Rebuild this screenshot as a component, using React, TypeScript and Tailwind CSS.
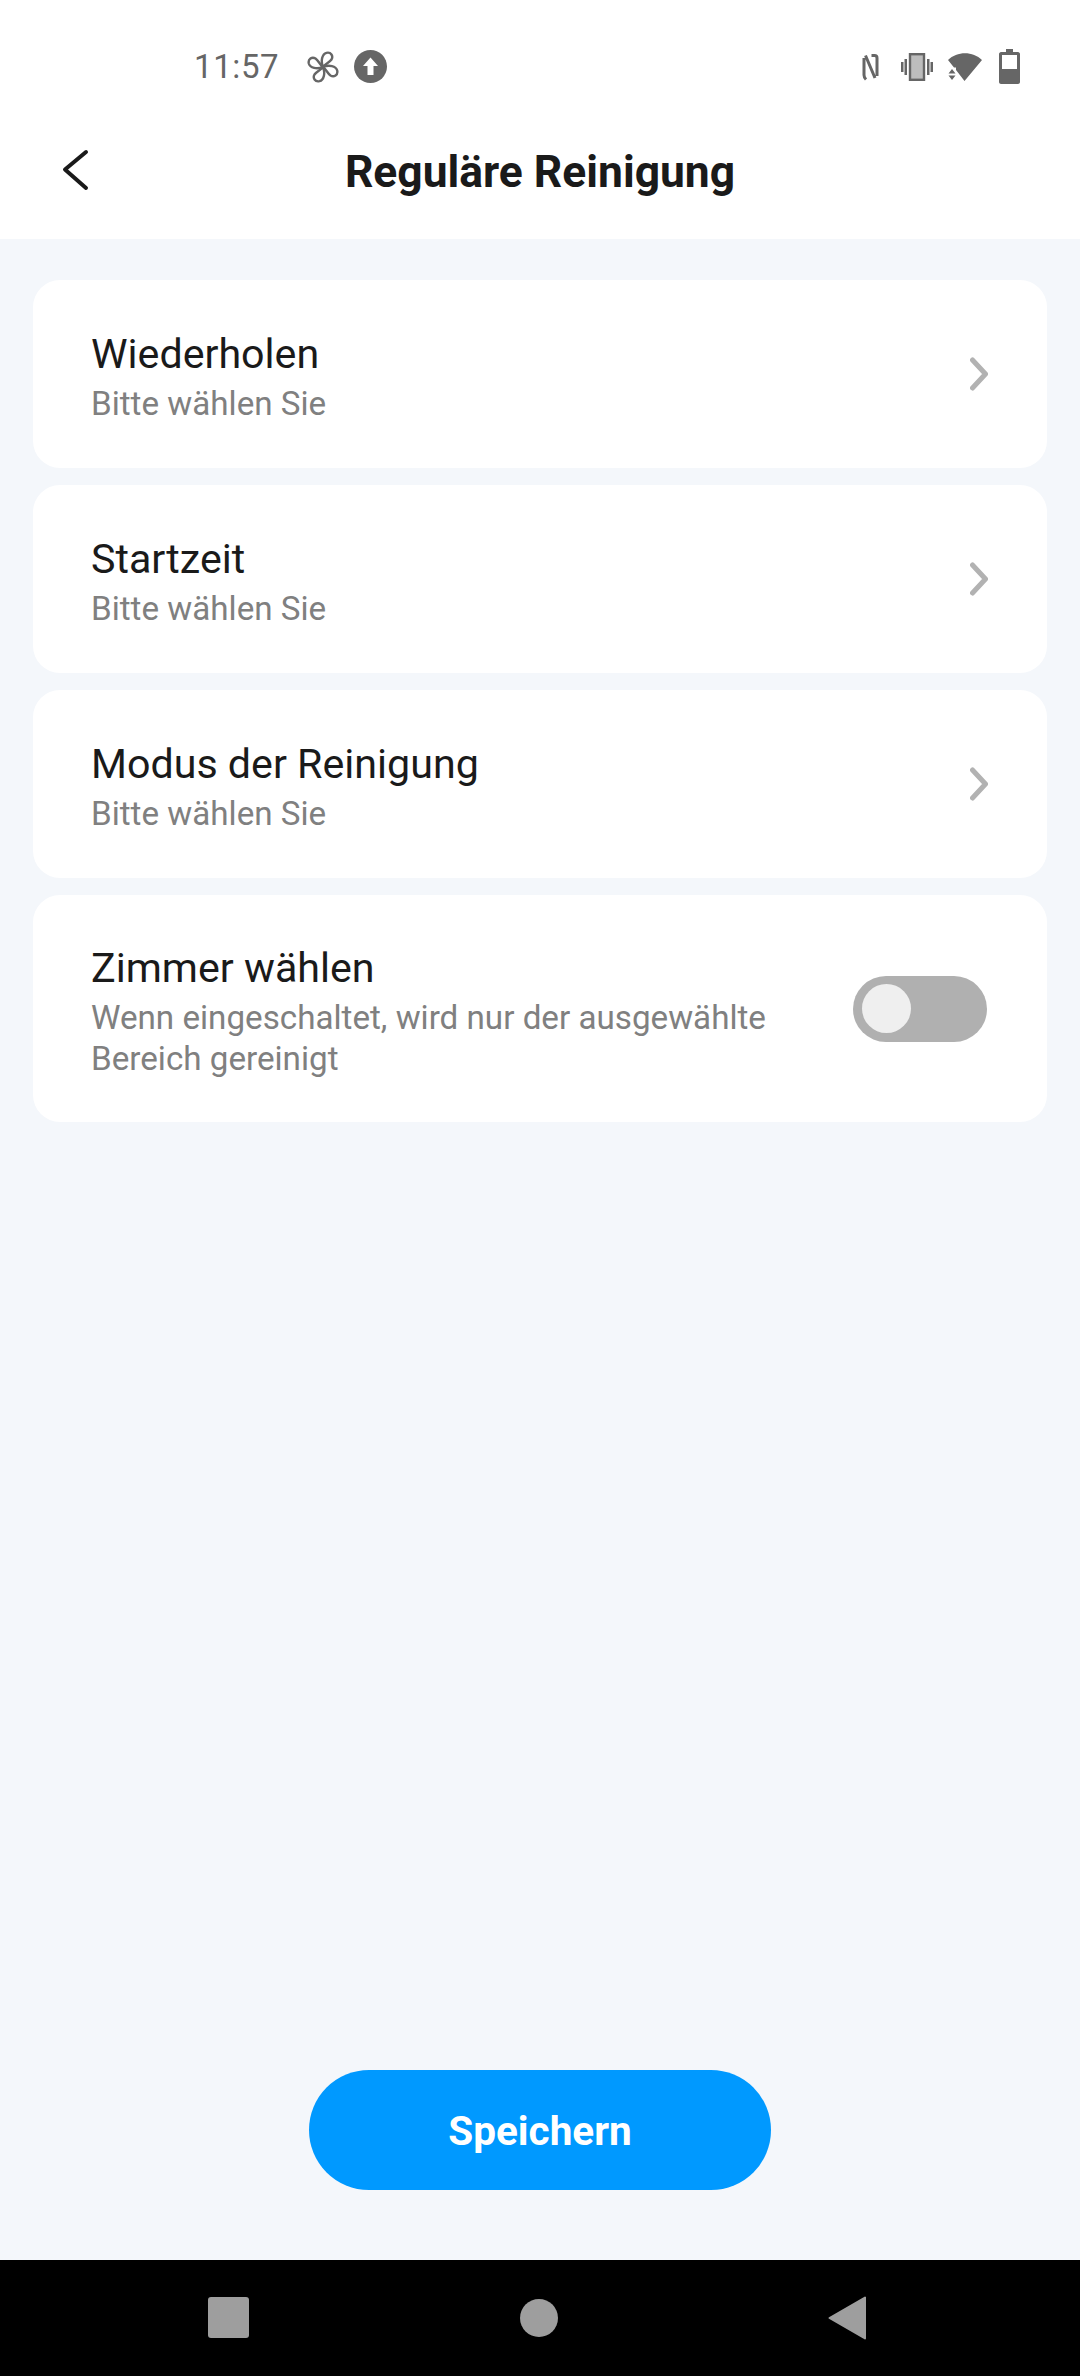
import React from "react";

const rows = ["Wiederholen", "Startzeit", "Modus der Reinigung"];

function Chevron() {
  return (
    <svg width="18" height="34" viewBox="0 0 18 34" fill="none" className="shrink-0">
      <path d="M2.5 3L15.5 17L2.5 31" stroke="#b2b2b2" strokeWidth="5" strokeLinecap="round" strokeLinejoin="round" />
    </svg>
  );
}

function StatusBar() {
  return (
    <div className="h-[120px] flex items-center pt-[13px] pl-[194px] pr-[60px] text-[#666666]">
      <span className="text-[33px] tracking-[0.6px] leading-none font-normal">11:57</span>
      {/* fan */}
      <svg width="32" height="32" viewBox="0 0 32 32" fill="none" className="ml-[28px]">
        {[0, 90, 180, 270].map((deg) => (
          <path
            key={deg}
            d="M16 16C13.5 10 15 3 19.5 1.8C24 0.8 26.5 5 24.5 8.5C22.5 11.5 18 13 16 16Z"
            transform={`rotate(${deg} 16 16)`}
            stroke="#666666"
            strokeWidth="2.4"
            strokeLinejoin="round"
          />
        ))}
      </svg>
      {/* upload */}
      <svg width="33" height="33" viewBox="0 0 33 33" className="ml-[15px]">
        <circle cx="16.5" cy="16.5" r="16.5" fill="#666666" />
        <path d="M16.5 7.5L24 16H19.5V25H13.5V16H9Z" fill="#ffffff" />
      </svg>
      <div className="ml-auto flex items-center">
        {/* nfc */}
        <svg width="17" height="28" viewBox="0 0 17 28" fill="none">
          <path d="M3.5 2.5L13 25M2 5V22C2 24 3 25.5 4 26.5M15 23V5C15 3.5 14 2.5 12.5 2.5H9.5" stroke="#666666" strokeWidth="3" strokeLinejoin="round" />
        </svg>
        {/* vibrate */}
        <svg width="34" height="28" viewBox="0 0 34 28" className="ml-[21px]">
          <rect x="1" y="9" width="2.5" height="10" fill="#666666" />
          <rect x="4.5" y="6" width="2.5" height="16" fill="#666666" />
          <rect x="30.5" y="9" width="2.5" height="10" fill="#666666" />
          <rect x="27" y="6" width="2.5" height="16" fill="#666666" />
          <rect x="10" y="1.2" width="14" height="25.6" fill="#bdbdbd" stroke="#666666" strokeWidth="2.4" />
        </svg>
        {/* wifi */}
        <svg width="34" height="28" viewBox="0 0 34 28" className="ml-[14px]">
          <path d="M0 7C9 -2 25 -2 34 7L16.5 28L8 17V14.5H6Z" fill="#666666" />
          <path d="M4 16L7.5 20.5H0.5Z M0.5 22.5H7.5L4 27Z" fill="#666666" />
        </svg>
        {/* battery */}
        <svg width="21" height="35" viewBox="0 0 21 35" className="ml-[17px] -mt-[1px]">
          <path d="M7 0H14V3H19C20 3 21 4 21 5V33C21 34 20 35 19 35H2C1 35 0 34 0 33V5C0 4 1 3 2 3H7Z" fill="#666666" />
          <rect x="3" y="6" width="15" height="14" fill="#ffffff" />
        </svg>
      </div>
    </div>
  );
}

function Row({ title }: { title: string }) {
  return (
    <div className="h-[188px] bg-white rounded-[27px] pl-[58px] pr-[59px] flex items-center justify-between">
      <div className="mt-[6px]">
        <div className="text-[41.2px] leading-[48px] text-[#1a1a1a]">{title}</div>
        <div className="text-[33.2px] leading-[40px] text-[#808080] mt-[6px]">Bitte wählen Sie</div>
      </div>
      <Chevron />
    </div>
  );
}

export default function App() {
  return (
    <div className="w-[1080px] h-[2376px] flex flex-col bg-[#f4f7fb] font-['Roboto',sans-serif]">
      <div className="bg-white">
        <StatusBar />
        <div className="h-[119px] relative flex items-center justify-center pb-[14px]">
          <svg width="28" height="42" viewBox="0 0 28 42" fill="none" className="absolute left-[61px] top-[29px]">
            <path d="M25 3L4 20.5L25 39" stroke="#1a1a1a" strokeWidth="4" strokeLinecap="round" strokeLinejoin="round" />
          </svg>
          <h1 className="text-[44.4px] font-bold text-[#1a1a1a] leading-none">Reguläre Reinigung</h1>
        </div>
      </div>

      <div className="flex-1 flex flex-col px-[33px] pt-[41px] pb-[70px]">
        <div className="flex flex-col gap-[17px]">
          {rows.map((r) => (
            <Row key={r} title={r} />
          ))}
          <div className="h-[227px] bg-white rounded-[27px] pl-[58px] pr-[60px] flex items-center justify-between">
            <div className="mt-[6px]">
              <div className="text-[41.2px] leading-[48px] text-[#1a1a1a]">Zimmer wählen</div>
              <div className="text-[33.2px] leading-[41px] text-[#808080] mt-[5px]">
                Wenn eingeschaltet, wird nur der ausgewählte
                <br />
                Bereich gereinigt
              </div>
            </div>
            <div className="w-[134px] h-[66px] rounded-full bg-[#b0b0b0] flex items-center pl-[9px]">
              <div className="w-[49px] h-[49px] rounded-full bg-[#efefef]" />
            </div>
          </div>
        </div>

        <button className="mt-auto self-center w-[462px] h-[120px] rounded-full bg-[#0099ff] text-white text-[40.5px] font-bold pt-[3px]">
          Speichern
        </button>
      </div>

      <div className="h-[116px] bg-black flex items-center justify-between pl-[208px] pr-[214px] pb-[1px]">
        <div className="w-[41px] h-[41px] rounded-[3px] bg-[#9e9e9e]" />
        <div className="w-[38px] h-[38px] rounded-full bg-[#9e9e9e]" />
        <svg width="38" height="44" viewBox="0 0 38 44">
          <path d="M37 1.5V42.5L1.5 22Z" fill="#9e9e9e" stroke="#9e9e9e" strokeWidth="2" strokeLinejoin="round" />
        </svg>
      </div>
    </div>
  );
}
